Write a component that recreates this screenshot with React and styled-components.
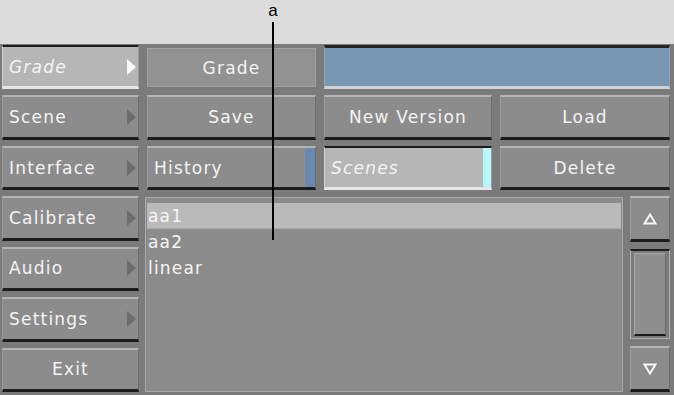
import React from 'react'
import styled, { createGlobalStyle, css } from 'styled-components'

const Global = createGlobalStyle`
    html, body { margin: 0; padding: 0; background: #dcdcdc; }
    body { width: 674px; height: 395px; overflow: hidden; }
`;

const Page = styled.div`
    position: relative;
    width: 674px;
    height: 395px;
    background: #dcdcdc;
    font-family: "DejaVu Sans", "Liberation Sans", sans-serif;
`;

const Callout = styled.div`
    position: absolute;
    left: 266px;
    top: 2px;
    width: 14px;
    display: flex;
    flex-direction: column;
    align-items: center;
    z-index: 5;
`;

const CalloutLetter = styled.span`
    font-family: "Liberation Sans", Arial, sans-serif;
    font-size: 17px;
    line-height: 18px;
    color: #000;
`;

const CalloutLine = styled.div`
    margin-top: 2px;
    width: 2px;
    height: 218px;
    background: #000;
`;

const Spacer = styled.div`
    height: 44px;
`;

const Panel = styled.div`
    height: 351px;
    box-sizing: border-box;
    background: #7b7b7b;
    padding: 1px 4px 3px 2px;
    display: grid;
    grid-template-columns: 137px 169px 168px 170px;
    grid-template-rows: repeat(7, 1fr);
    column-gap: 8px;
    row-gap: 6px;
`;

const raised = css`
    background: #8c8c8c;
    border-top: 2px solid #b4b4b4;
    border-bottom: 3px solid #1c1c1c;
    border-left: 1px solid #9a9a9a;
    border-right: 1px solid #6c6c6c;
`;

const pressed = css`
    background: #b6b6b6;
    border-top: 2px solid #1c1c1c;
    border-bottom: 3px solid #e6e6e6;
    border-left: 1px solid #cfcfcf;
    border-right: 1px solid #9a9a9a;
`;

const Button = styled.div`
    box-sizing: border-box;
    ${p => (p.$on ? pressed : raised)}
    display: flex;
    align-items: center;
    justify-content: ${p => (p.$left ? 'flex-start' : 'center')};
    padding: 0 ${p => (p.$left ? '6px' : '0')};
    color: #f4f4f4;
    font-size: 17px;
    letter-spacing: 1.2px;
    font-style: ${p => (p.$on ? 'italic' : 'normal')};
    position: relative;
    grid-column: ${p => p.$col || 'auto'};
    grid-row: ${p => p.$row || 'auto'};
`;

const FlatButton = styled.div`
    box-sizing: border-box;
    margin: 3px 0 2px;
    background: #929292;
    border: 1px solid #a0a0a0;
    display: flex;
    align-items: center;
    justify-content: center;
    color: #f4f4f4;
    font-size: 17px;
    letter-spacing: 1.2px;
`;

const Arrow = styled.span`
    position: absolute;
    right: 2px;
    top: 50%;
    margin-top: -8px;
    width: 0;
    height: 0;
    border-top: 8px solid transparent;
    border-bottom: 8px solid transparent;
    border-left: 9px solid ${p => (p.$on ? '#fafafa' : '#6c6c6c')};
`;

const Strip = styled.span`
    position: absolute;
    right: 0;
    top: 0;
    bottom: 0;
    width: ${p => p.$w}px;
    background: ${p => p.$color};
`;

const Field = styled.div`
    grid-column: 3 / 5;
    box-sizing: border-box;
    background: #7897b2;
    border-top: 3px solid #262626;
    border-bottom: 3px solid #d2d2d2;
    border-left: 1px solid #8aa6bf;
    border-right: 1px solid #8aa6bf;
`;

const Lower = styled.div`
    grid-column: 2 / 5;
    grid-row: 4 / 8;
    margin-left: -2px;
    display: grid;
    grid-template-columns: 1fr 40px;
    column-gap: 7px;
`;

const List = styled.div`
    box-sizing: border-box;
    margin-top: 1px;
    background: #8b8b8b;
    border: 1px solid #a9a9a9;
    padding: 5px 1px;
    display: flex;
    flex-direction: column;
`;

const ListRow = styled.div`
    height: 26px;
    line-height: 26px;
    padding-left: 1px;
    color: #f6f6f6;
    font-size: 17px;
    letter-spacing: 1.2px;
    background: ${p => (p.$sel ? '#bababa' : 'transparent')};
    border-bottom: 1px solid ${p => (p.$sel ? '#a8a8a8' : 'transparent')};
    box-sizing: border-box;
`;

const Scroll = styled.div`
    display: grid;
    grid-template-rows: 1fr 2fr 1fr;
    row-gap: 6px;
    height: 100%;
`;

const ScrollTrack = styled.div`
    box-sizing: border-box;
    margin: 1px 0;
    background: #7b7b7b;
    border-top: 2px solid #1c1c1c;
    border-bottom: 1px solid #b0b0b0;
    border-left: 1px solid #b0b0b0;
    border-right: 1px solid #b0b0b0;
    padding: 2px 3px;
    display: flex;
`;

const Thumb = styled.div`
    flex: 1;
    background: #8e8e8e;
    border-top: 1px solid #a8a8a8;
    border-left: 1px solid #a8a8a8;
    border-right: 1px solid #6a6a6a;
    border-bottom: 2px solid #1c1c1c;
`;

const Tri = ({ down }) => (
    <svg width="14" height="12" viewBox="0 0 14 12">
        <path
            d={down ? 'M1.5 1.5 L12.5 1.5 L7 10.5 Z' : 'M7 1.5 L12.5 10.5 L1.5 10.5 Z'}
            fill="none"
            stroke="#f6f6f6"
            strokeWidth="2"
            strokeLinejoin="miter"
        />
    </svg>
);

const menu = ['Grade', 'Scene', 'Interface', 'Calibrate', 'Audio', 'Settings'];
const scenes = ['aa1', 'aa2', 'linear'];

export default function App() {
    return (
        <Page>
            <Global />
            <Callout>
                <CalloutLetter>a</CalloutLetter>
                <CalloutLine />
            </Callout>
            <Spacer />
            <Panel>
                {menu.map((m, i) => (
                    <Button key={m} $left $on={i === 0} $col={1} $row={i + 1}>
                        {m}
                        <Arrow $on={i === 0} />
                    </Button>
                ))}
                <Button $col={1} $row={7}>Exit</Button>

                <FlatButton style={{ gridColumn: 2, gridRow: 1 }}>Grade</FlatButton>
                <Field style={{ gridRow: 1 }} />

                <Button $col={2} $row={2}>Save</Button>
                <Button $col={3} $row={2}>New Version</Button>
                <Button $col={4} $row={2}>Load</Button>

                <Button $left $col={2} $row={3}>
                    History
                    <Strip $w={10} $color="#6a88b0" />
                </Button>
                <Button $left $on $col={3} $row={3}>
                    Scenes
                    <Strip $w={8} $color="#b4f6fa" />
                </Button>
                <Button $col={4} $row={3}>Delete</Button>

                <Lower>
                    <List>
                        {scenes.map((s, i) => (
                            <ListRow key={s} $sel={i === 0}>{s}</ListRow>
                        ))}
                    </List>
                    <Scroll>
                        <Button><Tri /></Button>
                        <ScrollTrack><Thumb /></ScrollTrack>
                        <Button><Tri down /></Button>
                    </Scroll>
                </Lower>
            </Panel>
        </Page>
    )
}
